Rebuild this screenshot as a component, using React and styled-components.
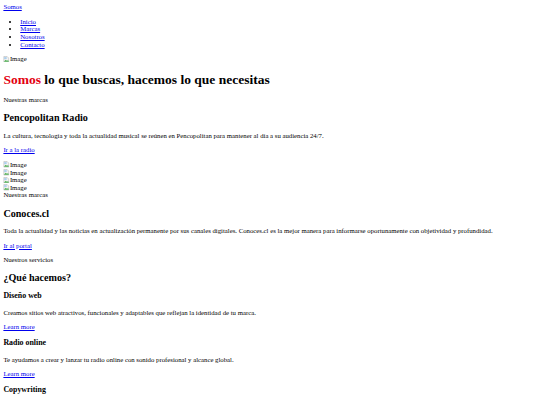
import React from "react";
import styled, { createGlobalStyle } from "styled-components";

// page is the plain unstyled markup, shown at 0.421875 of its size
const GlobalStyle = createGlobalStyle`
  html {
    background: #ffffff;
  }
  body {
    margin: 3.375px;
    font-family: "Liberation Serif", "Times New Roman", serif;
    font-size: 6.75px;
    line-height: 1.135;
    color: #000000;
  }
`;

const Header = styled.header`
  display: block;
`;

const Logo = styled.a`
  color: #0000ee;
  text-decoration: underline;
`;

const NavList = styled.ul`
  margin: 6.75px 0;
  padding-left: 16.875px;
  list-style: disc;
`;

const NavItem = styled.li`
  display: list-item;
`;

const TextLink = styled.a`
  color: #0000ee;
  text-decoration: underline;
`;

const ImageHolder = styled.span`
  display: inline;
  white-space: nowrap;

  svg {
    width: 6.5px;
    height: 6.5px;
    vertical-align: text-bottom;
  }
`;

const HeroTitle = styled.h1`
  font-size: 13.5px;
  font-weight: bold;
  margin: 9px 0;
`;

const Accent = styled.span`
  color: #e3000f;
`;

const Eyebrow = styled.div`
  font-size: 6.75px;
`;

const BrandTitle = styled.h2`
  font-size: 10.125px;
  font-weight: bold;
  margin: 8.4px 0;
`;

const Text = styled.p`
  margin: 6.75px 0;
`;

const Gallery = styled.div`
  display: block;
`;

const Slide = styled.div`
  display: block;
`;

const ServiceTitle = styled.h3`
  font-size: 7.9px;
  font-weight: bold;
  margin: 7.9px 0;
`;

const BrokenImage = ({ alt = "Image" }) => (
  <ImageHolder>
    <svg viewBox="0 0 16 16">
      <path d="M2 1h8l4 4v10H2z" fill="#f2f2f2" stroke="#9a9a9a" />
      <path d="M3 13l4-4 3 3 2-2 2 2v2H3z" fill="#4caf50" />
      <path d="M3 3h6v4H3z" fill="#9ec9ef" />
    </svg>
    {alt}
  </ImageHolder>
);

const brands = [
  {
    name: "Pencopolitan Radio",
    text: "La cultura, tecnología y toda la actualidad musical se reúnen en Pencopolitan para mantener al día a su audiencia 24/7.",
    link: "Ir a la radio",
  },
  {
    name: "Conoces.cl",
    text: "Toda la actualidad y las noticias en actualización permanente por sus canales digitales. Conoces.cl es la mejor manera para informarse oportunamente con objetividad y profundidad.",
    link: "Ir al portal",
  },
];

const services = [
  {
    title: "Diseño web",
    text: "Creamos sitios web atractivos, funcionales y adaptables que reflejan la identidad de tu marca.",
  },
  {
    title: "Radio online",
    text: "Te ayudamos a crear y lanzar tu radio online con sonido profesional y alcance global.",
  },
  {
    title: "Copywriting",
    text: "Redactamos textos persuasivos y contenidos que conectan con tu audiencia y tu marca.",
  },
];

const App = () => {
  return (
    <>
      <GlobalStyle />
      <Header>
        <Logo href="#">Somos</Logo>
        <nav>
          <NavList>
            {["Inicio", "Marcas", "Nosotros", "Contacto"].map((item) => (
              <NavItem key={item}>
                <TextLink href="#">{item}</TextLink>
              </NavItem>
            ))}
          </NavList>
        </nav>
      </Header>

      <BrokenImage />
      <HeroTitle>
        <Accent>Somos</Accent> lo que buscas, hacemos lo que necesitas
      </HeroTitle>

      <Eyebrow>Nuestras marcas</Eyebrow>
      <BrandTitle>{brands[0].name}</BrandTitle>
      <Text>{brands[0].text}</Text>
      <Text>
        <TextLink href="#">{brands[0].link}</TextLink>
      </Text>

      <Gallery>
        {[1, 2, 3, 4].map((n) => (
          <Slide key={n}>
            <BrokenImage />
          </Slide>
        ))}
      </Gallery>

      <Eyebrow>Nuestras marcas</Eyebrow>
      <BrandTitle>{brands[1].name}</BrandTitle>
      <Text>{brands[1].text}</Text>
      <Text>
        <TextLink href="#">{brands[1].link}</TextLink>
      </Text>

      <Eyebrow>Nuestros servicios</Eyebrow>
      <BrandTitle>¿Qué hacemos?</BrandTitle>
      {services.map((s) => (
        <div key={s.title}>
          <ServiceTitle>{s.title}</ServiceTitle>
          <Text>{s.text}</Text>
          <Text>
            <TextLink href="#">Learn more</TextLink>
          </Text>
        </div>
      ))}
    </>
  );
};

export default App;
